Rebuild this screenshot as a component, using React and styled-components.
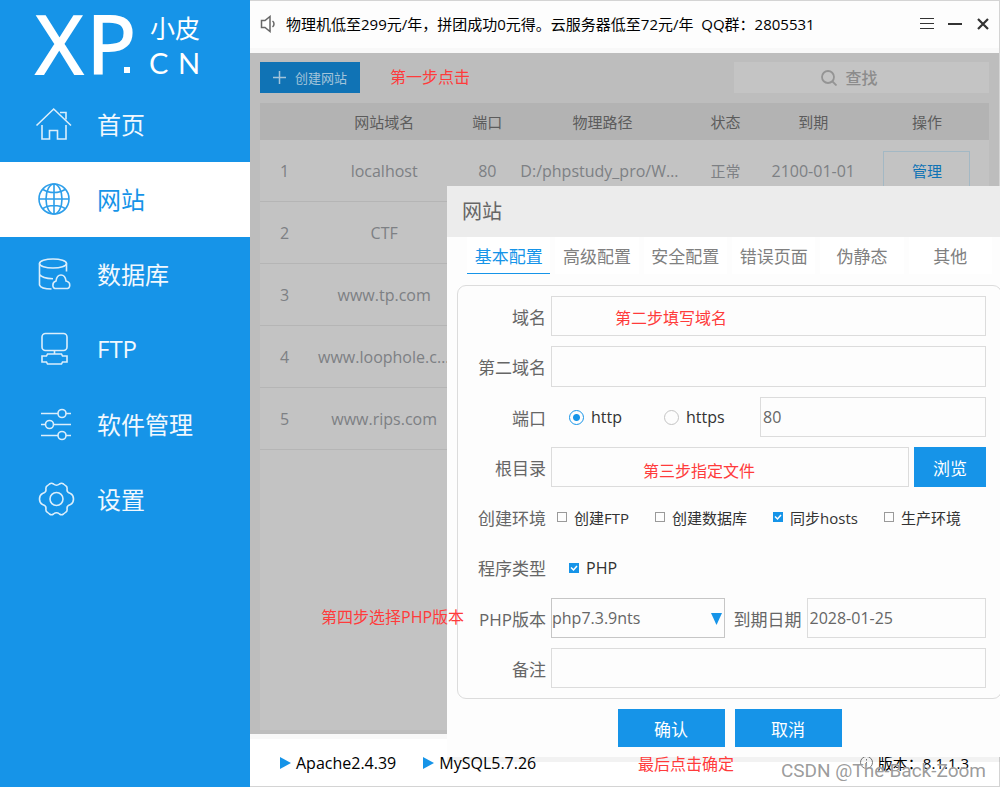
import React, { useState } from 'react';
import styled, { createGlobalStyle, ThemeProvider } from 'styled-components';

const theme = {
    blue: '#1694e8',
    line: '#dcdcdc',
    text: '#666',
    red: '#ff3b3b',
    sans: '"Open Sans", "Noto Sans CJK SC", sans-serif'
};

const GlobalStyle = createGlobalStyle`
    * {
        box-sizing: border-box;
    }
    body {
        margin: 0;
        font-family: ${theme.sans};
        font-size: 15px;
        color: #111;
    }
    button, input, select {
        font-family: inherit;
        border-radius: 0;
        margin: 0;
    }
`;

const AppWindow = styled.div`
    position: relative;
    display: flex;
    min-height: 100vh;
    overflow: hidden;
`;

const Sidebar = styled.aside`
    flex: 0 0 250px;
    background: ${({theme}) => theme.blue};
`;

const Logo = styled.svg`
    display: block;
    width: 250px;
    height: 87px;
    overflow: visible;
    fill: #fff;
`;

const NavLink = styled.a`
    display: flex;
    align-items: center;
    gap: 25px;
    height: 75px;
    padding: 0 0 2px 36px;
    font-size: 24px;
    text-decoration: none;
    color: ${({theme, $active}) => $active ? theme.blue : '#f1f8fe'};
    background: ${({$active}) => $active ? '#fff' : 'none'};
    svg {
        width: 36px;
        height: 36px;
        overflow: visible;
        fill: none;
        stroke: currentColor;
        stroke-width: 1.6;
        opacity: .9;
    }
`;

const Main = styled.div`
    flex: 1;
    min-width: 0;
    display: flex;
    flex-direction: column;
    border: 1px solid #d4d4d4;
    border-left: none;
`;

const TopBar = styled.header`
    display: flex;
    align-items: center;
    height: 52px;
    padding: 0 8px 2px 10px;
    border-bottom: 5px solid #f8f8f8;
    background: #fdfdfd;
    white-space: pre;
`;

const Notice = styled.p`
    flex: 1;
    margin: 0 0 0 10px;
    color: #000;
`;

const WindowButton = styled.button`
    display: flex;
    padding: 0;
    margin-left: 12px;
    border: none;
    background: none;
    color: #333;
`;

const Content = styled.main`
    flex: 1;
    display: flex;
    flex-direction: column;
    gap: 10px;
    padding: 9px 10px 4px 10px;
    background: #bdbdbd;
`;

const Toolbar = styled.div`
    display: flex;
    align-items: center;
    height: 31px;
`;

const CreateButton = styled.button`
    display: flex;
    align-items: center;
    gap: 9px;
    height: 31px;
    padding: 0 13px;
    border: none;
    background: #1073b5;
    color: #a3c4da;
    font-size: 13px;
`;

const SearchBox = styled.label`
    display: flex;
    align-items: center;
    justify-content: center;
    gap: 8px;
    width: 35%;
    height: 31px;
    margin-left: auto;
    background: #c4c4c4;
    color: #949494;
    input {
        width: 56px;
        padding: 0;
        border: none;
        background: none;
        font-size: 16px;
        font-weight: 500;
        &::placeholder {
            color: #8c8c8c;
        }
    }
`;

const TablePanel = styled.div`
    flex: 1;
    background: #c3c3c3;
`;

const SiteTable = styled.table`
    width: 100%;
    table-layout: fixed;
    border-collapse: separate;
    border-spacing: 0;
    text-align: center;
    color: #7d8084;
    th {
        height: 37px;
        padding: 0;
        background: #b3b3b3;
        color: #5c5c5c;
        font-weight: 400;
    }
    td {
        height: 62px;
        padding: 0 9px;
        border-bottom: 1px solid #b5b5b5;
        font-size: 16px;
        white-space: nowrap;
        overflow: hidden;
        text-overflow: ellipsis;
    }
    td.path {
        padding: 0 5px;
    }
    td.status, td.date {
        padding: 0;
    }
    td.status {
        font-size: 15px;
    }
`;

const ManageButton = styled.button`
    width: 87px;
    height: 40px;
    border: 1px solid #a3b8c4;
    background: none;
    color: #1073b5;
    font-size: 15px;
`;

const StatusBar = styled.footer`
    display: flex;
    align-items: center;
    gap: 27px;
    height: 52px;
    padding: 0 30px;
    border-top: 5px solid #f8f8f8;
    background: #fff;
    color: #000;
`;

const Service = styled.span`
    display: flex;
    align-items: center;
    gap: 5px;
    font-size: 16px;
`;

const Version = styled(Service)`
    margin-left: auto;
    font-size: 15px;
`;

const Dialog = styled.section`
    position: absolute;
    top: 186px;
    left: 447px;
    right: 0;
    overflow: hidden;
    padding-bottom: 10px;
    background: #fdfdfd;
    box-shadow: 0 5px 0 rgba(0, 0, 0, .05);
`;

const DialogTitle = styled.h2`
    margin: 0;
    padding-left: 15px;
    background: #ececec;
    color: ${({theme}) => theme.text};
    font-size: 20px;
    font-weight: 400;
    line-height: 51px;
`;

const Tabs = styled.div`
    display: flex;
    gap: 5px;
    padding: 0 8px 0 20px;
`;

const Tab = styled.button`
    flex: 1;
    height: 37px;
    padding: 0;
    border: none;
    border-bottom: 1px solid ${({theme, $active}) => $active ? theme.blue : '#fff'};
    background: #fff;
    color: ${({theme, $active}) => $active ? theme.blue : '#808080'};
    font-size: 17px;
    white-space: nowrap;
`;

const Form = styled.form`
    display: flex;
    flex-direction: column;
    gap: 10px;
    margin: 11px -2px 10px 10px;
    padding: 10px 15px 10px 0;
    border: 1px solid ${({theme}) => theme.line};
    border-radius: 9px;
`;

const Row = styled.div`
    display: flex;
    align-items: center;
    gap: 5px;
    height: ${({$tall}) => $tall ? 41 : 40}px;
`;

const Label = styled.label`
    flex: 0 0 ${({$short}) => $short ? 72 : 88}px;
    text-align: right;
    color: ${({theme}) => theme.text};
    font-size: 17px;
    white-space: nowrap;
`;

const Input = styled.input`
    flex: 1;
    min-width: 0;
    height: 100%;
    padding: 0 2px;
    border: 1px solid ${({theme}) => theme.line};
    background: none;
    color: ${({theme}) => theme.text};
    font-size: 16px;
`;

const PortInput = styled(Input)`
    flex: 0 0 226px;
`;

const Schemes = styled.div`
    flex: 1;
    display: flex;
    align-items: center;
    gap: 42px;
    padding-left: 18px;
`;

const SelectBox = styled.div`
    position: relative;
    flex: 1;
    select {
        display: block;
        width: 100%;
        height: 40px;
        padding: 0;
        border: 1px solid #c6c6c6;
        background: none;
        appearance: none;
        color: ${({theme}) => theme.text};
        font-size: 16px;
    }
    svg {
        position: absolute;
        top: 15px;
        right: 3px;
        pointer-events: none;
    }
`;

const Choices = styled.div`
    display: flex;
    gap: 26px;
    padding-left: ${({$indent}) => $indent ? 18 : 6}px;
`;

const Choice = styled.label`
    display: flex;
    align-items: center;
    gap: 7px;
    color: #333;
    font-size: ${({$large}) => $large ? 16 : 15}px;
    white-space: nowrap;
`;

const Radio = styled.input.attrs({type: 'radio'})`
    appearance: none;
    width: 15px;
    height: 15px;
    border: 1px solid #c4c4c4;
    border-radius: 50%;
    &:checked {
        border-color: ${({theme}) => theme.blue};
        background: radial-gradient(circle, ${({theme}) => theme.blue} 3px, transparent 4px);
    }
`;

const CheckMark = styled.span`
    display: flex;
    input {
        appearance: none;
        width: 10px;
        height: 10px;
        border: 1px solid #9a9a9a;
    }
    input:checked {
        border-color: ${({theme}) => theme.blue};
        background: ${({theme}) => theme.blue};
    }
    svg {
        width: 10px;
        margin-left: -10px;
        pointer-events: none;
    }
`;

const PrimaryButton = styled.button`
    width: ${({$wide}) => $wide ? 107 : 72}px;
    height: ${({$wide}) => $wide ? 38 : 40}px;
    padding: 0;
    border: none;
    background: ${({theme}) => theme.blue};
    color: #fff;
    font-size: 17px;
`;

const Actions = styled.div`
    display: flex;
    justify-content: center;
    gap: 10px;
    padding-left: 12px;
`;

const Note = styled.span`
    position: absolute;
    top: ${({$top}) => $top}px;
    left: ${({$left}) => $left}px;
    color: ${({theme}) => theme.red};
    font-size: 16px;
    line-height: 20px;
    white-space: nowrap;
    pointer-events: none;
`;

const Watermark = styled.span`
    position: absolute;
    right: 14px;
    bottom: 5px;
    color: rgba(130, 130, 130, .8);
    font-family: Roboto, "Liberation Sans", sans-serif;
    font-size: 19px;
    line-height: 22px;
    text-shadow: 0 0 1px #fff;
`;

const icons = {
    home: <>
        <path d="M.5 19.5 17.7 3 35 19.5" />
        <path d="M24 6.5h6v7" />
        <path d="M6 19v14h7.5v-8.5h8V33H30V19" />
    </>,
    globe: <>
        <circle cx="18" cy="18" r="15" />
        <ellipse cx="18" cy="18" rx="8" ry="15" />
        <path d="M18 3v30M3 18h30M7 8.5c6 4 16 4 22 0M7 27.5c6-4 16-4 22 0" />
    </>,
    database: <>
        <ellipse cx="17" cy="7.5" rx="13.5" ry="4.5" />
        <path d="M3.5 7.5v21.5c1 3 6 4 12 4M30.5 7.5v8M3.5 18.5c2 3 7 4 13.5 4.2" />
        <path d="M20.5 32.5c-5 0-4.5-6.5-.5-7.5 1-8 9-8 10 0 5 1 5 7.5 0 7.5z" />
    </>,
    ftp: <>
        <rect x="6" y="2.5" width="25" height="17" rx="3.5" />
        <path d="M18.5 19.5v3.5M11.5 23h14l1 2h4.5v6h-4.5l-1 2h-14l-1-2H6v-6h4.5z" />
    </>,
    sliders: <>
        <path d="M5 7.5h17M30 7.5h5M5 18.5h4.5M17.5 18.5H35M5 29.5h17M30 29.5h5" />
        <circle cx="26" cy="7.5" r="4" />
        <circle cx="13.5" cy="18.5" r="4" />
        <circle cx="26" cy="29.5" r="4" />
    </>,
    gear: <g transform="translate(20.5 18)">
        <circle r="6.5" />
        <path strokeLinejoin="round" d="M-3-15Q0-12.5 3-15Q5-16.5 7-15L9.5-13Q11-12 10.5-9Q10.5-6.5 14-5.5Q17-4 17 0Q17 4 14 5.5Q10.5 6.5 10.5 9Q11 12 9.5 13L7 15Q5 16.5 3 15Q0 12.5-3 15Q-5 16.5-7 15L-9.5 13Q-11 12-10.5 9Q-10.5 6.5-14 5.5Q-17 4-17 0Q-17-4-14-5.5Q-10.5-6.5-10.5-9Q-11-12-9.5-13L-7-15Q-5-16.5-3-15Z" />
    </g>
};

const navItems = [
    {label: '首页', icon: 'home'},
    {label: '网站', icon: 'globe'},
    {label: '数据库', icon: 'database'},
    {label: 'FTP', icon: 'ftp'},
    {label: '软件管理', icon: 'sliders'},
    {label: '设置', icon: 'gear'}
];

const columns = [
    {title: '', width: 49},
    {title: '网站域名', width: 150},
    {title: '端口', width: 56},
    {title: '物理路径', width: 174},
    {title: '状态', width: 72},
    {title: '到期', width: 103},
    {title: '操作', width: 124}
];

const sites = ['localhost', 'CTF', 'www.tp.com', 'www.loophole.com', 'www.rips.com'];

const tabs = ['基本配置', '高级配置', '安全配置', '错误页面', '伪静态', '其他'];

const Check = ({label, large, defaultChecked}) => {
    const [checked, setChecked] = useState(Boolean(defaultChecked));
    return (
        <Choice $large={large}>
            <CheckMark>
                <input type="checkbox" checked={checked} onChange={() => setChecked(!checked)} />
                {checked && <svg viewBox="0 0 10 10" fill="none" stroke="#fff" strokeWidth="1.5"><path d="M2 4.5 4.5 7 8 3" /></svg>}
            </CheckMark>
            {label}
        </Choice>
    );
};

const Play = () => <svg width="11" height="12" fill={theme.blue}><path d="M0 0 11 6 0 12z" /></svg>;

const SiteDialog = () => {
    const [tab, setTab] = useState(0);
    return (
        <Dialog role="dialog" aria-labelledby="dialog-title">
            <DialogTitle id="dialog-title">网站</DialogTitle>
            <Tabs>
                {tabs.map((name, i) => <Tab key={name} $active={tab === i} onClick={() => setTab(i)}>{name}</Tab>)}
            </Tabs>
            <Form id="site-form" onSubmit={(ev) => ev.preventDefault()}>
                <Row>
                    <Label htmlFor="domain">域名</Label>
                    <Input id="domain" />
                </Row>
                <Row $tall>
                    <Label htmlFor="domain2">第二域名</Label>
                    <Input id="domain2" />
                </Row>
                <Row>
                    <Label htmlFor="port">端口</Label>
                    <Schemes>
                        <Choice $large><Radio name="scheme" defaultChecked />http</Choice>
                        <Choice $large><Radio name="scheme" />https</Choice>
                    </Schemes>
                    <PortInput id="port" defaultValue="80" />
                </Row>
                <Row>
                    <Label htmlFor="root-dir">根目录</Label>
                    <Input id="root-dir" />
                    <PrimaryButton type="button">浏览</PrimaryButton>
                </Row>
                <Row>
                    <Label as="span">创建环境</Label>
                    <Choices>
                        <Check label="创建FTP" />
                        <Check label="创建数据库" />
                        <Check label="同步hosts" defaultChecked />
                        <Check label="生产环境" />
                    </Choices>
                </Row>
                <Row $tall>
                    <Label as="span">程序类型</Label>
                    <Choices $indent>
                        <Check large label="PHP" defaultChecked />
                    </Choices>
                </Row>
                <Row>
                    <Label htmlFor="php">PHP版本</Label>
                    <SelectBox>
                        <select id="php"><option>php7.3.9nts</option></select>
                        <svg width="11" height="12" fill={theme.blue}><path d="M0 0H11L5.5 12z" /></svg>
                    </SelectBox>
                    <Label $short htmlFor="expires">到期日期</Label>
                    <Input id="expires" defaultValue="2028-01-25" />
                </Row>
                <Row>
                    <Label htmlFor="remark">备注</Label>
                    <Input id="remark" />
                </Row>
            </Form>
            <Actions>
                <PrimaryButton $wide type="submit" form="site-form">确认</PrimaryButton>
                <PrimaryButton $wide type="button">取消</PrimaryButton>
            </Actions>
        </Dialog>
    );
};

export default function App() {
    return (
        <ThemeProvider theme={theme}>
            <GlobalStyle />
            <AppWindow>
                <Sidebar>
                    <Logo viewBox="0 0 250 87">
                        <g fontFamily="Open Sans" fontSize="81" stroke="#fff" strokeWidth="2">
                            <text x="36" y="74">X</text>
                            <text x="87" y="74">P</text>
                        </g>
                        <rect x="124" y="67" width="6" height="6" />
                        <text x="150" y="38" fontFamily="Noto Sans CJK SC" fontSize="25">小皮</text>
                        <g fontFamily="Lato" fontSize="29">
                            <text x="149" y="74">C</text>
                            <text x="178" y="74">N</text>
                        </g>
                    </Logo>
                    <nav>
                        {navItems.map(({label, icon}) => (
                            <NavLink href="#" key={icon} $active={icon === 'globe'}>
                                <svg viewBox="0 0 36 36">{icons[icon]}</svg>
                                {label}
                            </NavLink>
                        ))}
                    </nav>
                </Sidebar>
                <Main>
                    <TopBar>
                        <svg width="16" height="18" fill="none" stroke="#666" strokeWidth="1.5">
                            <path d="M1.5 5.5H5L10 1.5v15L5 12.5H1.5zM12.5 6c2 1.5 2 4.5 0 6" />
                        </svg>
                        <Notice>物理机低至299元/年，拼团成功0元得。云服务器低至72元/年  QQ群：2805531</Notice>
                        <WindowButton aria-label="菜单">
                            <svg width="16" height="16" stroke="currentColor"><path d="M1 2.5h14M1 7.5h14M1 12.5h14" /></svg>
                        </WindowButton>
                        <WindowButton aria-label="最小化">
                            <svg width="16" height="16" stroke="currentColor" strokeWidth="2"><path d="M1 8h14" /></svg>
                        </WindowButton>
                        <WindowButton aria-label="关闭">
                            <svg width="16" height="16" stroke="currentColor" strokeWidth="2.2"><path d="M3 3 13 13M13 3 3 13" /></svg>
                        </WindowButton>
                    </TopBar>
                    <Content>
                        <Toolbar>
                            <CreateButton>
                                <svg width="13" height="13" stroke="currentColor" strokeWidth="1.5"><path d="M6.5 0v13M0 6.5h13" /></svg>
                                创建网站
                            </CreateButton>
                            <SearchBox>
                                <svg width="16" height="16" fill="none" stroke="currentColor" strokeWidth="1.8">
                                    <circle cx="7" cy="7" r="6" />
                                    <path d="M11 11l4.5 4.5" />
                                </svg>
                                <input aria-label="查找" placeholder="查找" />
                            </SearchBox>
                        </Toolbar>
                        <TablePanel>
                            <SiteTable>
                                <colgroup>
                                    {columns.map((col) => <col key={col.title} width={col.width} />)}
                                </colgroup>
                                <thead>
                                    <tr>{columns.map((col) => <th key={col.title}>{col.title}</th>)}</tr>
                                </thead>
                                <tbody>
                                    {sites.map((site, i) => (
                                        <tr key={site}>
                                            <td>{i + 1}</td>
                                            <td>{site}</td>
                                            <td>{i === 0 && '80'}</td>
                                            <td className="path">{i === 0 && 'D:/phpstudy_pro/WWW'}</td>
                                            <td className="status">{i === 0 && '正常'}</td>
                                            <td className="date">{i === 0 && '2100-01-01'}</td>
                                            <td>{i === 0 && <ManageButton>管理</ManageButton>}</td>
                                        </tr>
                                    ))}
                                </tbody>
                            </SiteTable>
                        </TablePanel>
                    </Content>
                    <StatusBar>
                        <Service><Play />Apache2.4.39</Service>
                        <Service><Play />MySQL5.7.26</Service>
                        <Version>
                            <svg width="13" height="13" fill="none" stroke="#777"><circle cx="6.5" cy="6.5" r="6" /><path d="M6.5 3v1.5M6.5 6v4" /></svg>
                            版本：8.1.1.3
                        </Version>
                    </StatusBar>
                </Main>
                <SiteDialog />
                <Note $top={67} $left={390}>第一步点击</Note>
                <Note $top={308} $left={615}>第二步填写域名</Note>
                <Note $top={461} $left={643}>第三步指定文件</Note>
                <Note $top={607} $left={321}>第四步选择PHP版本</Note>
                <Note $top={754} $left={638}>最后点击确定</Note>
                <Watermark>CSDN @The-Back-Zoom</Watermark>
            </AppWindow>
        </ThemeProvider>
    );
}
